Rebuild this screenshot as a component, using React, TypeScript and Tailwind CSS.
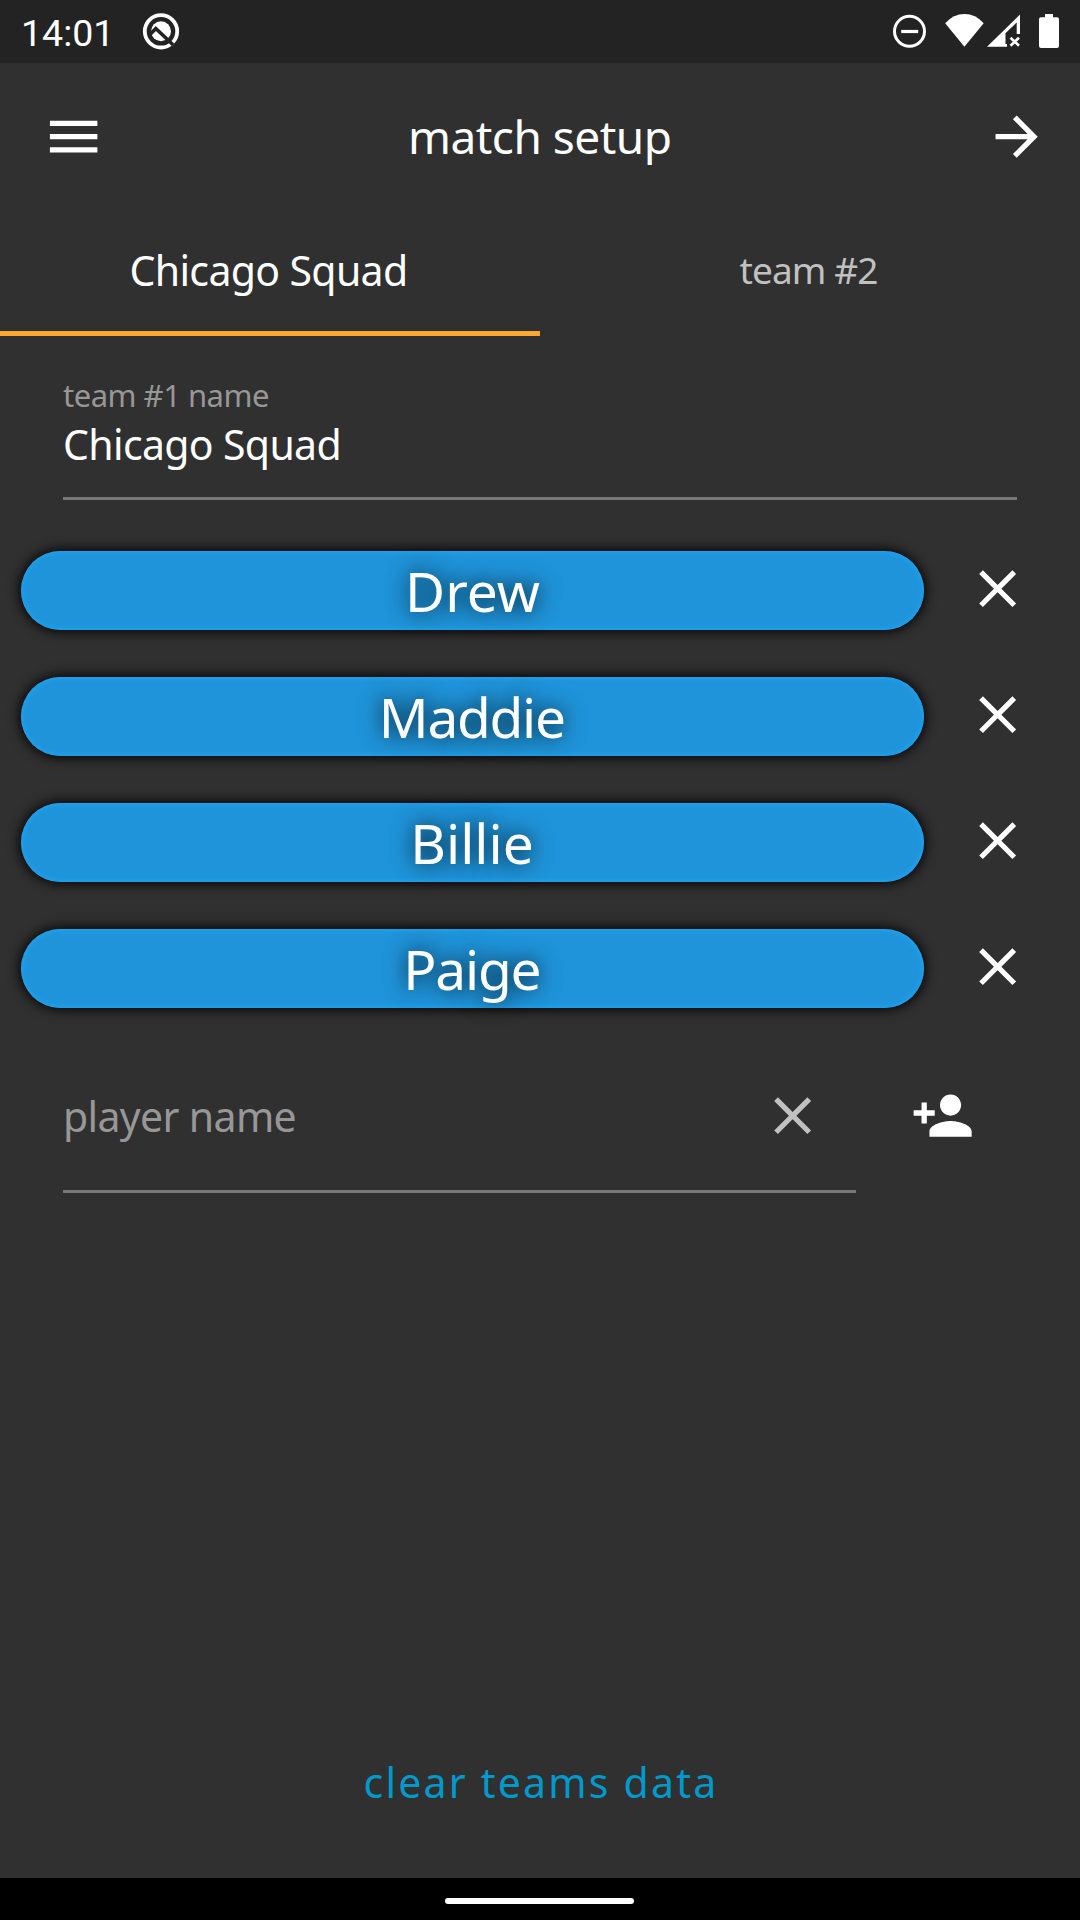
import React from "react";

const PLAYERS = [
  { name: "Drew", spacing: "tracking-[0px]" },
  { name: "Maddie", spacing: "tracking-[-1.3px] mr-[1.5px]" },
  { name: "Billie", spacing: "tracking-[0px] mr-[1px]" },
  { name: "Paige", spacing: "tracking-[-1.2px] mr-[1.5px]" },
];

function Icon({ d, className }: { d: string; className?: string }) {
  return (
    <svg viewBox="0 0 24 24" fill="currentColor" className={`size-[63.3px] shrink-0 ${className ?? ""}`}>
      <path d={d} />
    </svg>
  );
}

const MENU = "M3 18h18v-2H3v2zm0-5h18v-2H3v2zm0-7v2h18V6H3z";
const CLOSE =
  "M19 6.41 17.59 5 12 10.59 6.41 5 5 6.41 10.59 12 5 17.59 6.41 19 12 13.41 17.59 19 19 17.59 13.41 12z";
const ARROW = "M12 4l-1.41 1.41L16.17 11H4v2h12.17l-5.58 5.59L12 20l8-8z";
const PERSON_ADD =
  "M15 12c2.21 0 4-1.79 4-4s-1.79-4-4-4-4 1.79-4 4 1.79 4 4 4zm-9-2V7H4v3H1v2h3v3h2v-3h3v-2H6zm9 4c-2.67 0-8 1.34-8 4v2h16v-2c0-2.66-5.33-4-8-4z";

function StatusBar() {
  return (
    <div className="flex h-[63px] items-start bg-[#232323] pl-[21px] font-['Roboto',sans-serif] text-[37.5px]">
      <span className="mt-[11px] w-[121px] leading-[44px]">14:01</span>
      <svg width="38" height="38" viewBox="0 0 38 38" className="mt-[12px]">
        <circle cx="19" cy="19.3" r="16.2" fill="none" stroke="white" strokeWidth="3.8" />
        <circle cx="19" cy="19.3" r="10" fill="white" />
        <path d="M8 22.500 L13.800 16.500 L31 32.800" fill="none" stroke="#232323" strokeWidth="3.6" />
      </svg>
      <div className="flex-1" />
      <svg width="34" height="34" viewBox="0 0 34 34" className="mt-[14px]">
        <circle cx="16.5" cy="17.3" r="15" fill="none" stroke="white" strokeWidth="3" />
        <path d="M8.200 17.500h17" stroke="white" strokeWidth="3.2" />
      </svg>
      <svg width="40" height="34" viewBox="0 0 40 34" className="mt-[14px] ml-[18px]">
        <path d="M.2 9.200Q8.500 0 19.500 0T38.700 9.200L19.400 32.800z" fill="white" />
      </svg>
      <svg width="34" height="34" viewBox="0 0 34 34" className="mt-[14px] ml-[2px]">
        <path d="M0 32.800 33 .5V20h-3.300V8.500L18.500 19.300V30H20v2.800z" fill="white" />
        <path d="m23.500 23.700 8.500 8m0-8-8.500 8" stroke="white" strokeWidth="2.6" />
      </svg>
      <svg width="20" height="34" viewBox="0 0 20 34" className="mt-[14px] mr-[21px] ml-[18px]">
        <path d="M6 0h8v3.300h4q2 0 2 2V32q0 2-2 2H2q-2 0-2-2V5.300q0-2 2-2h4z" fill="white" />
      </svg>
    </div>
  );
}

export default function App() {
  return (
    <div className="flex h-[1920px] w-[1080px] flex-col overflow-hidden bg-[#303030] font-['Noto_Sans',sans-serif] text-white">
      <StatusBar />

      <header className="flex h-[147px] items-center justify-between pr-[31.5px] pl-[42px]">
        <Icon d={MENU} />
        <h1 className="mr-[11px] mb-[1px] text-[46px] leading-[60px] tracking-[-0.5px]">match setup</h1>
        <Icon d={ARROW} />
      </header>

      <nav className="flex h-[126px]">
        <div className="flex h-[126px] w-[540px] flex-col items-center border-b-[5px] border-[#ffa733] pt-[30px] pr-[3px]">
          <span className="text-[41px] leading-[60px] tracking-[-0.65px]">Chicago Squad</span>
        </div>
        <div className="flex w-[540px] flex-col items-center pt-[30px] pr-[3px]">
          <span className="text-[37px] leading-[60px] tracking-[-0.9px] text-[#c1c1c1]">team #2</span>
        </div>
      </nav>

      <div className="mx-[63px] flex h-[164px] flex-col border-b-[3px] border-[#787878] pt-[37px]">
        <label className="h-[41px] text-[31px] leading-[44px] tracking-[-0.5px] text-[#979797]">team #1 name</label>
        <div className="text-[41px] leading-[60px] tracking-[-0.65px]">Chicago Squad</div>
      </div>

      <ul className="mt-[51px] flex flex-col gap-[47px] pl-[21px]">
        {PLAYERS.map((p) => (
          <li key={p.name} className="flex h-[79px] items-center">
            <div className="flex h-[79px] w-[903px] justify-center rounded-full bg-[#1f94da] shadow-[0_0_12px_2px_rgba(0,0,0,0.9),inset_0_0_4px_2px_#20a0ec]">
              <span className={`text-[55px] leading-[79px] [text-shadow:0_0_22px_black] ${p.spacing}`}>{p.name}</span>
            </div>
            <Icon d={CLOSE} className="mb-[4px] ml-[42px]" />
          </li>
        ))}
      </ul>

      <div className="mt-[53px] flex h-[132px] pl-[63px]">
        <div className="flex h-[132px] w-[793px] items-start justify-between border-b-[3px] border-[#787878] pt-[23px] pr-[31.5px]">
          <span className="mt-[2px] text-[41px] leading-[60px] tracking-[-0.65px] text-[#979797]">player name</span>
          <Icon d={CLOSE} className="text-[#c1c1c1]" />
        </div>
        <Icon d={PERSON_ADD} className="mt-[22.5px] ml-[54.5px]" />
      </div>

      <div className="flex flex-1 items-end justify-center pb-[66px] pl-[2px]">
        <span className="text-[41px] leading-[60px] tracking-[2.2px] text-[#0099cc]">clear teams data</span>
      </div>

      <footer className="flex h-[42px] items-start justify-center bg-black pt-[20px] pr-[1px]">
        <div className="h-[6px] w-[189px] rounded-full bg-white" />
      </footer>
    </div>
  );
}
